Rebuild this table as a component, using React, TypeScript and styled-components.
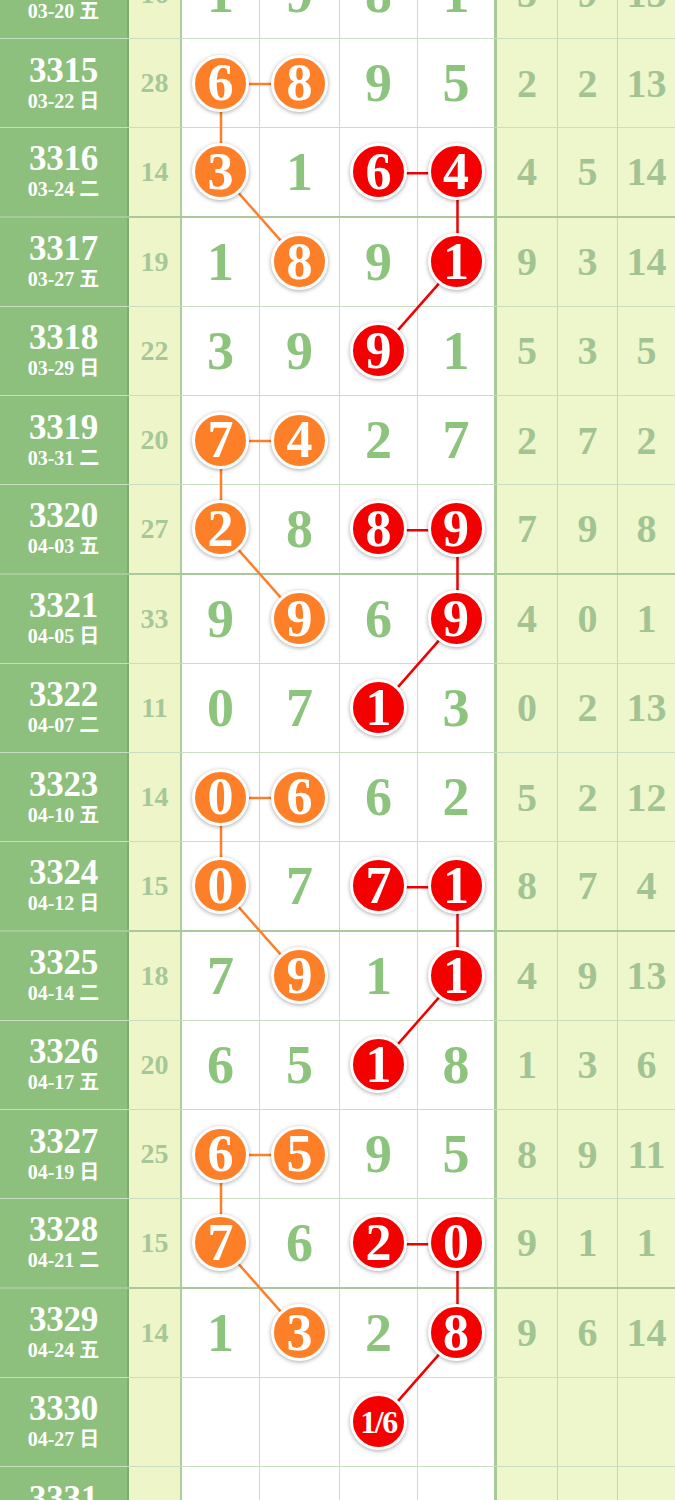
import React from "react";
import styled, { createGlobalStyle } from "styled-components";

const ROW_H = 89.25;
const COLS = [129, 53, 78, 80, 78, 79, 61, 60, 57];
const TEMPLATE = COLS.map((c) => `${c}px`).join(" ");
const OFFSET_TOP = -50.25;

const GlobalStyle = createGlobalStyle`
  html, body { margin: 0; padding: 0; background: #ffffff; }
  body { overflow: hidden; width: 675px; }
  * { box-sizing: border-box; }
`;

type RowData = {
  p: number;
  d: string;
  s: string;
  n: (number | string)[];
  b: string;
  st: (number | string)[];
};

const rows: RowData[] = [
  { p: 3314, d: "03-20 五", s: "16", n: [1, 9, 8, 1], b: "....", st: [3, 9, 13] },
  { p: 3315, d: "03-22 日", s: "28", n: [6, 8, 9, 5], b: "oo..", st: [2, 2, 13] },
  { p: 3316, d: "03-24 二", s: "14", n: [3, 1, 6, 4], b: "o.rr", st: [4, 5, 14] },
  { p: 3317, d: "03-27 五", s: "19", n: [1, 8, 9, 1], b: ".o.r", st: [9, 3, 14] },
  { p: 3318, d: "03-29 日", s: "22", n: [3, 9, 9, 1], b: "..r.", st: [5, 3, 5] },
  { p: 3319, d: "03-31 二", s: "20", n: [7, 4, 2, 7], b: "oo..", st: [2, 7, 2] },
  { p: 3320, d: "04-03 五", s: "27", n: [2, 8, 8, 9], b: "o.rr", st: [7, 9, 8] },
  { p: 3321, d: "04-05 日", s: "33", n: [9, 9, 6, 9], b: ".o.r", st: [4, 0, 1] },
  { p: 3322, d: "04-07 二", s: "11", n: [0, 7, 1, 3], b: "..r.", st: [0, 2, 13] },
  { p: 3323, d: "04-10 五", s: "14", n: [0, 6, 6, 2], b: "oo..", st: [5, 2, 12] },
  { p: 3324, d: "04-12 日", s: "15", n: [0, 7, 7, 1], b: "o.rr", st: [8, 7, 4] },
  { p: 3325, d: "04-14 二", s: "18", n: [7, 9, 1, 1], b: ".o.r", st: [4, 9, 13] },
  { p: 3326, d: "04-17 五", s: "20", n: [6, 5, 1, 8], b: "..r.", st: [1, 3, 6] },
  { p: 3327, d: "04-19 日", s: "25", n: [6, 5, 9, 5], b: "oo..", st: [8, 9, 11] },
  { p: 3328, d: "04-21 二", s: "15", n: [7, 6, 2, 0], b: "o.rr", st: [9, 1, 1] },
  { p: 3329, d: "04-24 五", s: "14", n: [1, 3, 2, 8], b: ".o.r", st: [9, 6, 14] },
  { p: 3330, d: "04-27 日", s: "", n: ["", "", "1/6", ""], b: "..r.", st: ["", "", ""] },
  { p: 3331, d: "04-29 二", s: "", n: ["", "", "", ""], b: "....", st: ["", "", ""] },
];

const Board = styled.div`
  position: relative;
  width: 675px;
  margin-top: ${OFFSET_TOP}px;
  font-family: "Liberation Serif", "Noto Sans CJK SC", serif;
`;

const Row = styled.div<{ $group: boolean }>`
  display: grid;
  grid-template-columns: ${TEMPLATE};
  height: ${ROW_H}px;
  border-bottom: ${(p) => (p.$group ? "2px solid #a9c89b" : "1px solid #c9ddc1")};
`;

const PeriodCell = styled.div`
  background: #8cc07c;
  border-right: 2px solid #7bae6c;
  color: #ffffff;
  display: flex;
  flex-direction: column;
  align-items: center;
  justify-content: center;
  gap: 3px;
  padding-top: 1px;
`;

const Period = styled.div`
  font-size: 35px;
  line-height: 32px;
  font-weight: 700;
  letter-spacing: -0.3px;
`;

const DateText = styled.div`
  font-size: 20px;
  line-height: 23px;
  font-weight: 700;
`;

const SumCell = styled.div`
  background: #eef6c9;
  border-right: 2px solid #b1cd9f;
  color: #a6c79a;
  font-size: 28px;
  font-weight: 700;
  display: flex;
  align-items: center;
  justify-content: center;
`;

const DigitCell = styled.div<{ $last?: boolean }>`
  background: #ffffff;
  border-right: ${(p) => (p.$last ? "3px solid #a9c89b" : "1px solid #c9ddc1")};
  color: #8cc47d;
  font-size: 54px;
  font-weight: 700;
  display: flex;
  align-items: center;
  justify-content: center;
`;

const StatCell = styled.div<{ $last?: boolean }>`
  background: #eef7cb;
  border-right: ${(p) => (p.$last ? "none" : "1px solid #c2d9b2")};
  color: #a2c495;
  font-size: 40px;
  font-weight: 700;
  display: flex;
  align-items: center;
  justify-content: center;
`;

const Ball = styled.div<{ $color: "o" | "r"; $small?: boolean }>`
  position: relative;
  z-index: 2;
  width: 57px;
  height: 57px;
  border-radius: 50%;
  background: ${(p) => (p.$color === "o" ? "#fd7f28" : "#f50000")};
  border: 3px solid #ffffff;
  box-shadow: 0 1px 4px rgba(0, 0, 0, 0.35);
  color: #ffffff;
  font-size: ${(p) => (p.$small ? "32px" : "52px")};
  font-weight: 700;
  letter-spacing: ${(p) => (p.$small ? "-1.5px" : "0")};
  display: flex;
  align-items: center;
  justify-content: center;
  line-height: 1;
`;

const Lines = styled.svg`
  position: absolute;
  left: 0;
  top: 0;
  z-index: 1;
  pointer-events: none;
`;

const colStart = (i: number) => COLS.slice(0, i).reduce((a, b) => a + b, 0);
const colCenter = (c: number) => colStart(2 + c) + COLS[2 + c] / 2;
const rowCenter = (r: number) => r * ROW_H + ROW_H / 2;

type Seg = { r1: number; c1: number; r2: number; c2: number; color: string };

function buildSegments(): Seg[] {
  const segs: Seg[] = [];
  rows.forEach((row, i) => {
    if (row.b === "oo..") {
      const col = "#fd7f28";
      segs.push({ r1: i, c1: 0, r2: i, c2: 1, color: col });
      segs.push({ r1: i, c1: 0, r2: i + 1, c2: 0, color: col });
      segs.push({ r1: i + 1, c1: 0, r2: i + 2, c2: 1, color: col });
    }
    if (row.b === "o.rr") {
      const col = "#f00000";
      segs.push({ r1: i, c1: 2, r2: i, c2: 3, color: col });
      segs.push({ r1: i, c1: 3, r2: i + 1, c2: 3, color: col });
      segs.push({ r1: i + 1, c1: 3, r2: i + 2, c2: 2, color: col });
    }
  });
  return segs;
}

export default function App() {
  const segs = buildSegments();
  const totalH = rows.length * ROW_H;
  return (
    <>
      <GlobalStyle />
      <Board>
        {rows.map((row) => (
          <Row key={row.p} $group={row.p % 4 === 0}>
            <PeriodCell>
              <Period>{row.p}</Period>
              <DateText>{row.d}</DateText>
            </PeriodCell>
            <SumCell>{row.s}</SumCell>
            {row.n.map((v, ci) => {
              const mark = row.b[ci];
              return (
                <DigitCell key={ci} $last={ci === 3}>
                  {mark === "o" || mark === "r" ? (
                    <Ball $color={mark} $small={String(v).length > 1}>
                      {v}
                    </Ball>
                  ) : (
                    v
                  )}
                </DigitCell>
              );
            })}
            {row.st.map((v, si) => (
              <StatCell key={si} $last={si === 2}>
                {v}
              </StatCell>
            ))}
          </Row>
        ))}
        <Lines width={675} height={totalH} viewBox={`0 0 675 ${totalH}`}>
          {segs.map((s, k) => (
            <line
              key={k}
              x1={colCenter(s.c1)}
              y1={rowCenter(s.r1)}
              x2={colCenter(s.c2)}
              y2={rowCenter(s.r2)}
              stroke={s.color}
              strokeWidth={2.5}
            />
          ))}
        </Lines>
      </Board>
    </>
  );
}
